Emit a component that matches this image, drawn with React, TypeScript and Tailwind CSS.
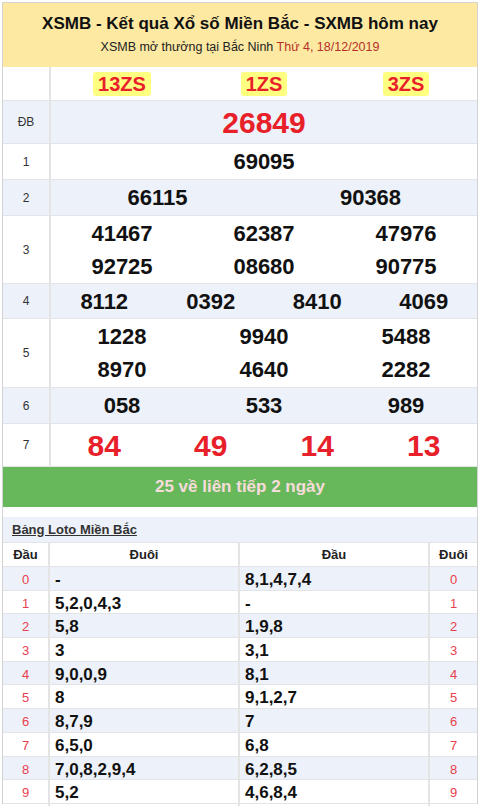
import React from "react"

const font = { fontFamily: '"Liberation Sans", Arial, sans-serif' }

const prizes: { label: string; rows: string[][]; h: string; size: string; red?: boolean; bg: boolean }[] = [
  { label: "ĐB", rows: [["26849"]], h: "h-[42px]", size: "text-[30px]", red: true, bg: true },
  { label: "1", rows: [["69095"]], h: "h-[35px]", size: "text-[22px]", bg: false },
  { label: "2", rows: [["66115", "90368"]], h: "h-[35px]", size: "text-[22px]", bg: true },
  { label: "3", rows: [["41467", "62387", "47976"], ["92725", "08680", "90775"]], h: "h-[67px]", size: "text-[22px]", bg: false },
  { label: "4", rows: [["8112", "0392", "8410", "4069"]], h: "h-[34px]", size: "text-[22px]", bg: true },
  { label: "5", rows: [["1228", "9940", "5488"], ["8970", "4640", "2282"]], h: "h-[68px]", size: "text-[22px]", bg: false },
  { label: "6", rows: [["058", "533", "989"]], h: "h-[35px]", size: "text-[22px]", bg: true },
  { label: "7", rows: [["84", "49", "14", "13"]], h: "h-[42px]", size: "text-[30px]", red: true, bg: false },
]

const loto: [string, string][] = [
  ["-", "8,1,4,7,4"],
  ["5,2,0,4,3", "-"],
  ["5,8", "1,9,8"],
  ["3", "3,1"],
  ["9,0,0,9", "8,1"],
  ["8", "9,1,2,7"],
  ["8,7,9", "7"],
  ["6,5,0", "6,8"],
  ["7,0,8,2,9,4", "6,2,8,5"],
  ["5,2", "4,6,8,4"],
]

export default function App() {
  return (
    <div className="w-[480px] h-[806px] bg-white overflow-hidden pt-[2px] px-[2px]" style={font}>
      <div className="border border-[#d2d2d2] border-b-0">
        {/* header */}
        <div className="h-[64px] bg-[#fde9a2] flex flex-col items-center pt-[11px]">
          <div className="text-[17px] font-bold text-[#111] leading-[20px]">
            XSMB - Kết quả Xổ số Miền Bắc - SXMB hôm nay
          </div>
          <div className="text-[12.5px] text-[#222] leading-[16px] mt-[5px]">
            XSMB mở thưởng tại Bắc Ninh <span className="text-[#b5302a]">Thứ 4, 18/12/2019</span>
          </div>
        </div>

        {/* codes */}
        <div className="flex h-[34px] border-b border-[#e2e4e8]">
          <div className="w-[48px] border-r-2 border-[#e4e4e4]" />
          <div className="flex-1 grid grid-cols-3 items-center">
            {["13ZS", "1ZS", "3ZS"].map((c) => (
              <div key={c} className="flex justify-center">
                <span className="bg-[#ffff80] rounded-[3px] px-[5px] h-[24px] leading-[24px] text-[20px] font-bold text-[#e8202a]">
                  {c}
                </span>
              </div>
            ))}
          </div>
        </div>

        {/* prizes */}
        {prizes.map((p) => (
          <div key={p.label} className={`flex border-b border-[#e2e4e8] ${p.bg ? "bg-[#edf1f9]" : "bg-white"}`}>
            <div className={`w-[48px] border-r-2 border-[#e4e4e4] flex items-center justify-center text-[12px] text-[#333] ${p.h}`}>
              {p.label}
            </div>
            <div className="flex-1 flex flex-col justify-center">
              {p.rows.map((r, i) => (
                <div
                  key={i}
                  className={`grid ${r.length === 1 ? "grid-cols-1" : r.length === 2 ? "grid-cols-2" : r.length === 3 ? "grid-cols-3" : "grid-cols-4"}`}
                >
                  {r.map((n) => (
                    <div
                      key={n}
                      className={`text-center font-bold ${p.size} ${p.red ? "text-[#e8202a]" : "text-[#111]"} leading-[33px]`}
                    >
                      {n}
                    </div>
                  ))}
                </div>
              ))}
            </div>
          </div>
        ))}

        {/* streak */}
        <div className="h-[40px] bg-[#67b85b] flex items-center justify-center text-[17px] font-bold text-[#f8dcdc]">
          25 về liên tiếp 2 ngày
        </div>

        <div className="h-[10px] bg-white" />

        {/* loto */}
        <div className="h-[26px] bg-[#edf1f9] border-b border-[#e2e4e8] flex items-center pl-[9px]">
          <span className="text-[13px] font-bold text-[#333] underline">Bảng Loto Miền Bắc</span>
        </div>
        <div className="grid grid-cols-[47px_190px_190px_1fr] h-[24px] border-b border-[#e2e4e8] text-[13px] font-bold text-[#222]">
          <div className="flex items-center justify-center border-r-2 border-[#e4e4e4]">Đầu</div>
          <div className="flex items-center justify-center border-r-2 border-[#e4e4e4]">Đuôi</div>
          <div className="flex items-center justify-center border-r-2 border-[#e4e4e4]">Đầu</div>
          <div className="flex items-center justify-center">Đuôi</div>
        </div>
        {loto.map(([a, b], i) => (
          <div
            key={i}
            className={`grid grid-cols-[47px_190px_190px_1fr] h-[23.7px] border-b border-[#e2e4e8] ${i % 2 === 0 ? "bg-[#edf1f9]" : "bg-white"}`}
          >
            <div className="flex items-center justify-center border-r-2 border-[#e4e4e4] text-[13px] text-[#e8404f]">{i}</div>
            <div className="flex items-center pl-[5px] border-r-2 border-[#e4e4e4] text-[17px] font-bold text-[#111]">{a}</div>
            <div className="flex items-center pl-[5px] border-r-2 border-[#e4e4e4] text-[17px] font-bold text-[#111]">{b}</div>
            <div className="flex items-center justify-center text-[13px] text-[#e8404f]">{i}</div>
          </div>
        ))}
      </div>
    </div>
  )
}
